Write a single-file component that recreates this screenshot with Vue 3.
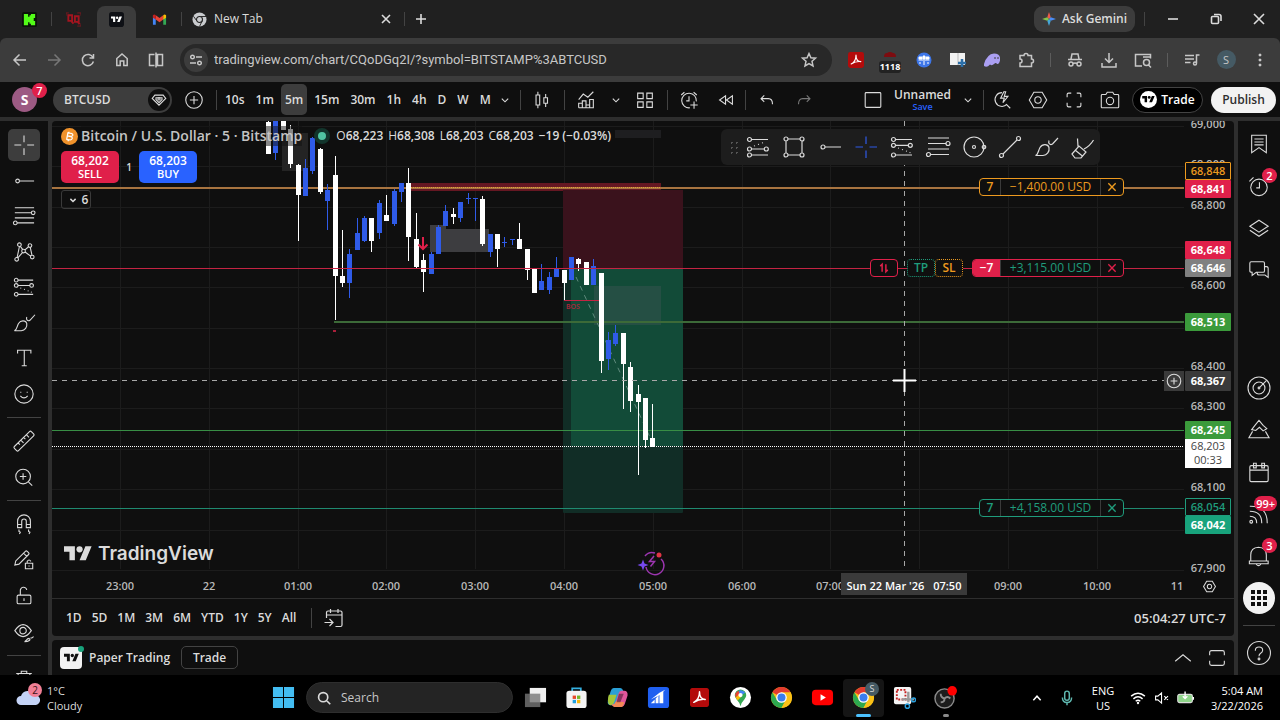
<script setup>
import { h, ref } from 'vue'

// circle as a path segment, so every icon stays a single d string
const c = (x, y, r) => `M${x - r} ${y}a${r} ${r} 0 1 0 ${2 * r} 0a${r} ${r} 0 1 0 ${-2 * r} 0`

const icons = {
  back: 'M18 12H6.5M11.5 6.5L6 12l5.5 5.5',
  forward: 'M6 12h11.5M12.5 6.5L18 12l-5.5 5.5',
  reload: 'M17 9.5A5.6 5.6 0 1 0 17.4 13.5M17.5 6v4h-4',
  home: 'M6.8 10.5v7h3.4v-4.5h3.6v4.5h3.4v-7L12 6z',
  split: 'M10.5 6.5h-5v11h5M13.5 6.5h5v11h-5zM12 4.5v15',
  tune: 'M6 9h1' + c(8.5, 9, 1.8) + 'M12 9h6M6 15h6' + c(15.5, 15, 1.8),
  star: 'M12 5.5l1.9 4.3 4.6.4-3.5 3.1 1 4.6-4-2.4-4 2.4 1-4.6-3.5-3.1 4.6-.4z',
  puzzle: 'M6 7.5h4a2 2 0 0 1 4 0h3.5v3.5a2 2 0 0 1 0 4v3.5H6v-3.5a2 2 0 0 0 0-4z',
  incognito: 'M5 11.5h14M8 11l1-5h6l1 5' + c(8, 16, 2) + c(16, 16, 2) + 'M10 15.5q2-1 4 0',
  download: 'M12 5v9M8 10.5l4 4 4-4M5 15v4h14v-4',
  tabsearch: 'M11 18H4.5V6.5h15v4M12 9h7' + c(15.5, 14.5, 3) + 'M17.5 17l2.5 2.5',
  playlist: 'M5 7.5h9M5 11h9M5 14.5h5.5M16.5 15V7h3' + c(15, 15.5, 1.5),
  dots: c(12, 7, 0.7) + c(12, 12, 0.7) + c(12, 17, 0.7),
  x: 'M8 8l8 8M16 8l-8 8',
  close: 'M7 7l10 10M17 7L7 17',
  plus: 'M12 7v10M7 12h10',
  minimize: 'M7 12h10',
  restore: 'M8.5 9.5h5q1 0 1 1v5q0 1-1 1h-5q-1 0-1-1v-5q0-1 1-1zM10 7.5h5q2 0 2 2V14',
  chevron: 'M8.5 10.5l3.5 3.5 3.5-3.5',
  chevronUp: 'M3.5 15.5l8.5-7 8.5 7',
  trayUp: 'M8 14.5l4-4.5 4 4.5',
  addCircle: c(12, 12, 9) + 'M12 7.5v9M7.5 12h9',
  candles: 'M5.5 6.5h4v11h-4zM7.5 3v3.5M7.5 17.5V21M14 9.5h4v6h-4zM16 5.5v4M16 15.5v4',
  indicators: 'M4 20.5v-5h4v5M8 20.5v-7.5h4v7.5M12 20.5v-3h4v3M16 20.5v-9h4v9zM4 20.5h16M4 11.5l5-6 5 3.5 6-6',
  layouts: 'M4 4.5h6v6H4zM14 4.5h6v6h-6zM4 14h6v6H4zM14 14h6v6h-6z',
  alertAdd: 'M13 20.5a8 8 0 1 1 7-7M12 8v5H9M3.5 6.5L7 3.5M17 3.5l3.5 3M17.5 13.5v8M13.5 17.5h8',
  rewind: 'M11.5 7.5v9L5 12zM19 7.5v9L12.5 12z',
  undo: 'M9 7l-3.5 3.5L9 14M6 10.5h7.5q4.5 0 4.5 6',
  redo: 'M15 7l3.5 3.5L15 14M18 10.5h-7.5q-4.5 0-4.5 6',
  square: 'M4.5 4h15q1 0 1 1v14q0 1-1 1h-15q-1 0-1-1V5q0-1 1-1z',
  quickSearch: 'M12 4a7.5 7.5 0 1 0 5.5 12.5M17 17l4 4M14 3l-3.5 7h4L13 15l5.5-7h-4L16 3z',
  hexagon: 'M7.5 3.5h9L21.5 12l-5 8.5h-9L2.5 12z' + c(12, 12, 3.5),
  fullscreen: 'M4.5 9V6q0-1.5 1.5-1.5h3M15 4.5h3q1.5 0 1.5 1.5v3M19.5 15v3q0 1.5-1.5 1.5h-3M9 19.5H6q-1.5 0-1.5-1.5v-3',
  maximize: 'M4 9V6q0-2 2-2h12q2 0 2 2v3M4 15v3q0 2 2 2h12q2 0 2-2v-3',
  camera: 'M3.5 6h4L9 3.5h6L16.5 6h4q1 0 1 1v12.5q0 1-1 1h-17q-1 0-1-1V7q0-1 1-1z' + c(12, 13, 4),
  cross: 'M1.5 12h7.5M15.5 12H23M12 1.5V9M12 15.5V23',
  hline: c(5, 12, 2) + 'M7 12h16',
  fib: 'M2 3h21M2 8.5h18' + c(22, 8.5, 2) + 'M2 14h21' + c(2.5, 19.5, 2) + 'M4.5 19.5H23',
  pattern: c(7, 4, 2) + c(18.5, 5, 2) + c(11.5, 11, 2) + c(4, 20, 2) + c(21, 17.5, 2) +
    'M7 6L4.5 18M8 5.8L10.5 9.2M13 9.7L17 6.3M18.8 7L20.7 15.5M13.2 12L19.2 16.5M10.3 12.6L5.3 18.5',
  forecast: c(3.5, 4.5, 2) + c(3.5, 10.3, 2) + c(20.3, 10.3, 2) + c(3.5, 20, 2) +
    'M5.5 4.5H22M5.5 10.3h12.8M5.5 20H22M8 13l1 .3M12 14.5l1 .3M16 16l1 .3M19.5 17.5l1 .3',
  longPos: c(3.5, 4.5, 2) + c(3.5, 14, 2) + c(20.3, 14, 2) + c(3.5, 20, 2) +
    'M5.5 4.5H22M5.5 14h12.8M5.5 20H22M8 11l1-.3M12 9.5l1-.3M16 8l1-.3',
  brush: 'M1.5 20.5c3-1 2.5-4.5 4.5-8 2.5-4 8-3.5 9 0 .8 4-2 7.5-6 8zM15 5.5c-1 3 1 5 3.5 3.5L24 3',
  text: 'M5 7V3.5h14.5V7M12.3 3.5v17M9.5 20.5h5.5',
  smile: c(12, 12, 10) + 'M8.5 9.5v1M15.5 9.5v1M8 14q4 4.5 8 0',
  ruler: 'M1.5 18L18 1.8q1-1 2 0l2.5 2.5q1 1 0 2L6 22.5q-1 1-2 0L1.5 20q-1-1 0-2zM5.5 14l2 2M8.5 11l3 3M11.5 8l2 2M14.5 5l3 3',
  zoomIn: c(11, 11.5, 8) + 'M17 17.5l4 4M11 8v7M7.5 11.5h7',
  magnet: 'M5 16V9a7 7 0 0 1 14 0v7h-4.5V9a2.5 2.5 0 0 0-5 0v7zM5 12.5h4.5M14.5 12.5H19M6.5 18v2l1.5 1-1 2M17 18v2l1.5 1-1 2',
  pencilLock: 'M2 17.5l1-4.5L13.5 2.5q1-1 2 0l1.5 1.5q1 1 0 2L6.5 16.5zM11.5 4.5l3.5 3.5M13.5 15.5h8v6h-8zM15.5 15.5v-2q2-3 4 0M17.5 18v1',
  lock: 'M6 11h12q1.5 0 1.5 1.5v6.5q0 1.5-1.5 1.5H6q-1.5 0-1.5-1.5v-6.5Q4.5 11 6 11zM8 11V6.5a3.5 3.5 0 0 1 7-1M12 14.5v3',
  eye: 'M2 10.5q9-13 18 0q-9 13-18 0z' + c(11, 10.5, 3.5) + 'M12.5 22.5c2 0 2-3.5 5-3.5 2.5 1.5 0 3.5-5 3.5zM19 18.5h1.5l2-1.5',
  trash: 'M3.5 6h17M9 6V3.5h6V6M5.5 6l1 15h11l1-15',
  calendarGo: 'M4.5 12V6.5Q4.5 5 6 5h12.5Q20 5 20 6.5V19q0 1.5-1.5 1.5h-5M4.5 9H20M8.5 3v4M16 3v4M2.5 16.5h8M7.5 13l3.5 3.5L7.5 20',
  rect: 'M6 4h12M6 20h12M4 6v12M20 6v12' + c(4, 4, 2) + c(20, 4, 2) + c(4, 20, 2) + c(20, 20, 2),
  circle: c(12, 12, 10) + c(12, 12, 1.5) + c(22, 12, 1.7),
  trend: c(3.5, 20.5, 2) + c(20.5, 3.5, 2) + 'M5 19L19 5',
  eraser: 'M2 19l7-8 7 6-5 6H5zM5 15l8 6.5M8 11.5l-.5-8M14 14q6-3 9.5-9',
  reverse: 'M9.5 17V7L7 9.5M14.5 7v10l2.5-2.5',
  list: 'M4 2.5h16v19L12 16l-8 5.5zM7 6.5h10M7 9.8h10M7 13h10',
  alarm: c(12, 13.5, 9) + 'M12.5 8v6H9M1.5 7L6 2.5',
  layers: 'M12 3.5l10 6.5-10 6.5L2 10zM2 14.5l10 6.5 10-6.5',
  chat: 'M3.5 3h13Q18 3 18 4.5V13q0 1.5-1.5 1.5H9L4.5 18v-3.5Q2 14.5 2 13V4.5Q2 3 3.5 3zM18 8q4 0 4 2v10l-3.5-2.5H12Q10 17.5 10 15',
  target: c(12, 12, 12) + c(12, 12, 6.5) + c(12, 12, 1) + 'M13 11l7-7',
  pine: 'M8 6.5L12 1.5l4.5 5.5M8 6.5L4 11.5l4.5 1 4-3.5 4 4 4-2.5-4-3.5M5 13.5L1 20.5h22l-4-7',
  calendar: 'M3.5 5h17Q22 5 22 6.5V21q0 1.5-1.5 1.5h-17Q2 22.5 2 21V6.5Q2 5 3.5 5zM2 10h20M6 2.5h3v5H6zM15 2.5h3v5h-3z',
  feed: c(3.5, 20.5, 1.5) + 'M2 14.5q7.5 0 7.5 7.5M2 9q13 0 13 13M2 3.5Q21 3 21 22',
  bell: 'M3 17.5V11q0-8 8.5-8.5Q20 3 20 11v6.5zM1.5 17.5H22v3H1.5zM9 21q2.5 3 5 0',
  help: c(12, 12, 12.5) + 'M8 9.5q0-4 4-4t4 3.5q0 2-2.5 3.5-1.5 1-1.5 3' + c(12, 18.5, 1),
  search: c(11, 11, 5.5) + 'M15 15l4.5 4.5',
  mic: 'M9.5 7a2.5 2.5 0 0 1 5 0v5a2.5 2.5 0 0 1-5 0zM7 11.5q0 5.5 5 5.5t5-5.5M12 17v3',
  wifi: 'M4.5 10q7.5-6.5 15 0M7 13q5-4.5 10 0M9.5 15.5q2.5-2 5 0' + c(12, 17.5, 0.5),
  mute: 'M5 10v4h2.5l4 3.5v-11L7.5 10zM14.5 10l4 4M18.5 10l-4 4',
}

const Icon = (props) =>
  h('svg', { viewBox: '0 0 24 24', class: 'icon', 'aria-hidden': 'true' }, [h('path', { d: icons[props.name] })])
Icon.props = ['name']

const symbol = ref('BTCUSD')
const url = ref('tradingview.com/chart/CQoDGq2I/?symbol=BITSTAMP%3ABTCUSD')
const query = ref('')
const interval = ref('5m')
const intervals = ['10s', '1m', '5m', '15m', '30m', '1h', '4h', 'D', 'W', 'M']
const ranges = ['1D', '5D', '1M', '3M', '6M', 'YTD', '1Y', '5Y', 'All']

const drawTools = [
  ['cross', 'hline', 'fib', 'pattern', 'forecast', 'brush', 'text', 'smile'],
  ['ruler', 'zoomIn'],
  ['magnet', 'pencilLock', 'lock', 'eye'],
  ['trash'],
]
const favourites = ['longPos', 'rect', 'hline', 'cross', 'forecast', 'fib', 'circle', 'trend', 'brush', 'eraser']
const railTop = [{ icon: 'list' }, { icon: 'alarm', badge: '2' }, { icon: 'layers' }, { icon: 'chat' }]
const railBottom = [
  { icon: 'target' },
  { icon: 'pine' },
  { icon: 'calendar' },
  { icon: 'feed', badge: '99+' },
  { icon: 'bell', badge: '3' },
]

// [high, low, body top, body bottom, rising], in plot pixels
const bars = [
  [-1, 33, 1, 33, 0], [-6, 39, -1, 32, 1], [-6, 9, -6, 9, 0], [4, 47, 8, 43, 0], [43, 120, 44, 74, 0],
  [38, 75, 47, 75, 1], [16, 53, 17, 50, 1], [27, 73, 28, 71, 0], [63, 109, 69, 80, 1], [35, 199, 54, 155, 0],
  [109, 166, 155, 162, 0], [128, 177, 133, 162, 1], [97, 129, 112, 129, 1], [95, 121, 97, 120, 1], [97, 131, 97, 120, 0],
  [79, 118, 82, 112, 1], [74, 100, 94, 100, 0], [68, 105, 70, 103, 1], [62, 81, 62, 71, 1], [47, 140, 62, 116, 0],
  [92, 147, 118, 146, 0], [133, 171, 139, 151, 0], [131, 153, 133, 153, 1], [104, 133, 106, 133, 1], [84, 105, 90, 105, 1],
  [87, 103, 93, 96, 0], [81, 101, 81, 97, 1], [72, 83, 77, 78, 1], [77, 100, 77, 78, 1], [75, 125, 78, 123, 0],
  [113, 136, 113, 131, 1], [113, 146, 113, 128, 0], [116, 126, 121, 122, 1], [118, 124, 118, 119, 1], [102, 128, 118, 128, 0],
  [128, 159, 128, 149, 0], [148, 172, 148, 172, 0], [143, 169, 160, 169, 1], [151, 173, 156, 169, 1], [136, 156, 147, 156, 1],
  [149, 179, 149, 162, 0], [136, 159, 136, 159, 1], [137, 150, 138, 143, 0], [141, 164, 141, 164, 0], [138, 164, 145, 164, 1],
  [152, 252, 152, 240, 0], [211, 249, 219, 238, 1], [204, 225, 212, 223, 1], [212, 288, 212, 243, 0], [241, 291, 246, 280, 0],
  [264, 354, 273, 281, 0], [277, 327, 277, 319, 0], [283, 326, 317, 326, 0],
]
const candles = bars.map(([high, low, top, bottom, up], i) => ({
  x: Math.round(216 + i * 7.39), high, low, top, height: Math.max(bottom - top, 1), up,
}))

const gridRows = Array.from({ length: 12 }, (_, i) => Math.round(5 + i * 40.35))
const gridCols = Array.from({ length: 12 }, (_, i) => Math.round(68 + i * 88.8))

const prices = ['69,000', '68,900', '68,800', '68,700', '68,600', '', '68,400', '68,300', '', '68,100', '', '67,900']
  .map((text, i) => ({ text, y: gridRows[i] - 2 }))
  .filter((p) => p.text)
const hours = ['23:00', '22', '01:00', '02:00', '03:00', '04:00', '05:00', '06:00', '07:00', '', '09:00', '10:00']
  .map((text, i) => ({ text, x: gridCols[i] }))
  .filter((t) => t.text)
hours.push({ text: '11', x: 1125 })

const tags = [
  { text: '68,848', y: 50, kind: 'orange' },
  { text: '68,841', y: 68, kind: 'red' },
  { text: '68,648', y: 129, kind: 'red' },
  { text: '68,646', y: 147, kind: 'gray' },
  { text: '68,513', y: 201, kind: 'green' },
  { text: '68,367', y: 260, kind: 'cursor' },
  { text: '68,245', y: 309, kind: 'green' },
  { text: '68,054', y: 386, kind: 'outline' },
  { text: '68,042', y: 404, kind: 'teal' },
]
</script>

<template>
  <div class="desktop">
    <svg class="defs" aria-hidden="true">
      <symbol id="tv" viewBox="0 0 36 28">
        <path d="M14 22H7V11H0V4h14v18zM28 22h-8l7.5-18h8L28 22z" />
        <circle cx="20" cy="8" r="4" />
      </symbol>
      <symbol id="chrome" viewBox="0 0 24 24">
        <circle cx="12" cy="12" r="11" fill="#fbc116" />
        <path d="M12 12L2.5 6.5A11 11 0 0 1 21.5 6.5z" fill="#e33b2e" />
        <path d="M2.5 6.5L7.5 15 12 12 16.5 14.5 12 23A11 11 0 0 1 2.5 6.5z" fill="#2da94f" />
        <path d="M12 6.5h9.5A11 11 0 0 1 12 23l4.5-8.5z" fill="#fbc116" />
        <circle cx="12" cy="12" r="5.5" fill="#fff" />
        <circle cx="12" cy="12" r="4.2" fill="#3b7ded" />
      </symbol>
      <symbol id="pdf" viewBox="0 0 20 20">
        <rect width="20" height="20" rx="3" fill="#b30b0b" />
        <path d="M4 15c4-2 6-6 6-11 0 5 2 8 6 8-4-.5-8 .5-12 3z" fill="none" stroke="#fff" stroke-width="1.5" stroke-linejoin="round" />
      </symbol>
    </svg>

    <header class="tabs">
      <button class="tab" aria-label="Kick">
        <svg viewBox="0 0 16 16" class="fav"><rect width="16" height="16" rx="2" fill="#0b120a" /><path d="M2 2h4.500v3H8V3.500h1.500V2H14v4.500h-1.500v3H14V14H9.500v-1.500H8V11H6.500v3H2z" fill="#53fc18" /></svg>
      </button>
      <span class="bar"></span>
      <button class="tab" aria-label="Pinned tab">
        <svg viewBox="0 0 16 16" class="fav"><path d="M2.5 3.5h4v6h-4zM9.5 4.5h4v6h-4zM5 9l3 3.5M12 10l2.5 3" fill="none" stroke="#a3141f" stroke-width="2" /><path d="M0 4V1h3M12 1h4v3M16 12v3h-4" fill="none" stroke="#7c1820" /></svg>
      </button>
      <button class="tab current" aria-label="TradingView">
        <svg viewBox="0 0 16 16" class="fav"><rect width="16" height="16" rx="3" fill="#0e1015" /><use href="#tv" x="2" y="3" width="12" height="10" fill="#fff" /></svg>
      </button>
      <button class="tab" aria-label="Gmail">
        <svg viewBox="0 0 16 16" class="fav"><path d="M1 3.5v10h3V7z" fill="#4285f4" /><path d="M15 3.5v10h-3V7z" fill="#34a853" /><path d="M4 3.5V8l4 3 4-3V3.5l-4 3z" fill="#ea4335" /><path d="M1 3.5Q2.5 2 4 3.5V8L1 6z" fill="#c5221f" /><path d="M15 3.5Q13.5 2 12 3.5V8l3-2z" fill="#fbbc04" /></svg>
      </button>
      <span class="bar"></span>
      <div class="newtab">
        <svg viewBox="0 0 16 16" class="fav"><circle cx="8" cy="8" r="7.5" fill="#c9cbce" /><path d="M8 4.8h7M5.2 9.5L1.5 4.5M10.8 9.5L8 15.5" stroke="#242424" /><circle cx="8" cy="8" r="3.2" fill="#c9cbce" stroke="#242424" stroke-width="1.2" /></svg>
        <span>New Tab</span>
        <button aria-label="Close tab"><Icon name="x" class="bold" /></button>
      </div>
      <span class="bar"></span>
      <button class="add" aria-label="New tab"><Icon name="plus" class="bold" /></button>
      <button class="gemini">
        <svg viewBox="0 0 16 16"><path d="M8 0l2 6L8 8 6 6z" fill="#ee5a48" /><path d="M16 8l-6 2-2-2 2-2z" fill="#4a8df6" /><path d="M8 16l-2-6 2-2 2 2z" fill="#45a7d8" /><path d="M0 8l6-2 2 2-2 2z" fill="#86c34b" /></svg>
        Ask Gemini
      </button>
      <span class="bar"></span>
      <div class="window-buttons">
        <button aria-label="Minimize"><Icon name="minimize" class="bold" /></button>
        <button aria-label="Restore"><Icon name="restore" class="bold" /></button>
        <button aria-label="Close"><Icon name="close" class="bold" /></button>
      </div>
    </header>

    <nav class="toolbar">
      <button aria-label="Back"><Icon name="back" /></button>
      <button aria-label="Forward" class="dim"><Icon name="forward" /></button>
      <button aria-label="Reload"><Icon name="reload" /></button>
      <button aria-label="Home"><Icon name="home" /></button>
      <button aria-label="Split view"><Icon name="split" /></button>
      <div class="address">
        <span class="site"><Icon name="tune" /></span>
        <input v-model="url" aria-label="Address" />
        <button aria-label="Bookmark"><Icon name="star" /></button>
      </div>
      <button aria-label="Acrobat"><svg class="ext"><use href="#pdf" width="16" height="16" /></svg></button>
      <button aria-label="Blocker" class="blocker">
        <svg viewBox="0 0 24 24"><path d="M6 9q0-4 3-4 3-2 6 0 3 0 3 4z" fill="#7d0c10" /></svg>
        <b>1118</b>
      </button>
      <button aria-label="Extension"><svg viewBox="0 0 16 16" class="ext"><circle cx="8" cy="8" r="7.5" fill="#3d76e8" /><path d="M3 5h3v2H3zM7 4h2v3H7zM10 5h3v2h-3zM2.5 8h11M4 10v2M8 9v4M12 10v2" fill="#fff" stroke="#fff" /></svg></button>
      <button aria-label="Reader"><svg viewBox="0 0 16 16" class="ext"><path d="M0 1h15v12H0z" fill="#f2f2f2" /><path d="M8 1v12" stroke="#bbb" /><path d="M12 7v8M8 11h8" stroke="#2c6fa8" stroke-width="2.5" /></svg></button>
      <button aria-label="Phantom"><svg viewBox="0 0 16 16" class="ext"><path d="M0 12Q3 2 10 1.5q7 0 6 7-1 4-3 3.5-1-2-3 0-2 2-4 .5Q3 16 0 14z" fill="#ab9ff2" /><path d="M11 5v2M14 5v2" stroke="#3c3c3c" /></svg></button>
      <button aria-label="Extensions"><Icon name="puzzle" /></button>
      <span class="bar"></span>
      <button aria-label="Incognito"><Icon name="incognito" /></button>
      <button aria-label="Downloads"><Icon name="download" /></button>
      <button aria-label="Search tabs"><Icon name="tabsearch" /></button>
      <span class="bar"></span>
      <button aria-label="Media"><Icon name="playlist" /></button>
      <button aria-label="Profile"><span class="profile">S</span></button>
      <button aria-label="Menu"><Icon name="dots" /></button>
    </nav>

    <main class="app">
      <div class="topbar">
        <button class="user" aria-label="Account">S<i class="badge">7</i></button>
        <div class="symbol">
          <input v-model="symbol" aria-label="Symbol" />
          <span><svg viewBox="0 0 24 24"><path d="M6.5 5.5h11L21 10l-9 9-9-9zM8 9h8v2.5L12 15.5 8 11.5z" /><circle cx="12" cy="10.5" r="1.5" /></svg></span>
        </div>
        <button class="tool" aria-label="Compare"><Icon name="addCircle" /></button>
        <span class="bar"></span>
        <div class="intervals">
          <button v-for="item in intervals" :key="item" :class="{ active: item === interval }" @click="interval = item">{{ item }}</button>
        </div>
        <button class="tool small more" aria-label="More intervals"><Icon name="chevron" /></button>
        <span class="bar"></span>
        <button class="tool" aria-label="Chart type"><Icon name="candles" /></button>
        <span class="bar"></span>
        <button class="tool" aria-label="Indicators"><Icon name="indicators" /></button>
        <button class="tool small" aria-label="Favourite indicators"><Icon name="chevron" /></button>
        <button class="tool" aria-label="Templates"><Icon name="layouts" /></button>
        <span class="bar"></span>
        <button class="tool" aria-label="Alert"><Icon name="alertAdd" /></button>
        <button class="tool snug" aria-label="Replay"><Icon name="rewind" /></button>
        <span class="bar"></span>
        <button class="tool" aria-label="Undo"><Icon name="undo" /></button>
        <button class="tool snug dim" aria-label="Redo"><Icon name="redo" /></button>
        <button class="tool layout" aria-label="Layout"><Icon name="square" /></button>
        <button class="name">Unnamed<small>Save</small></button>
        <button class="tool snug" aria-label="Layouts"><Icon name="chevron" /></button>
        <span class="bar"></span>
        <button class="tool narrow" aria-label="Quick search"><Icon name="quickSearch" /></button>
        <button class="tool narrow" aria-label="Settings"><Icon name="hexagon" /></button>
        <button class="tool narrow" aria-label="Fullscreen"><Icon name="fullscreen" /></button>
        <button class="tool narrow" aria-label="Snapshot"><Icon name="camera" /></button>
        <button class="trade"><svg viewBox="0 0 16 16"><circle cx="8" cy="8" r="8" fill="#fff" /><use href="#tv" x="2" y="3" width="12" height="10" /></svg>Trade</button>
        <button class="publish">Publish</button>
      </div>

      <aside class="tools">
        <div v-for="(group, i) in drawTools" :key="i" class="group">
          <button v-for="name in group" :key="name" :class="{ active: name === 'cross' }" :aria-label="name"><Icon :name="name" /></button>
        </div>
      </aside>

      <section class="chart">
        <div class="plot">
          <svg class="canvas" width="100%" height="100%">
            <g class="grid">
              <line v-for="y in gridRows" :key="'r' + y" x1="0" x2="100%" :y1="y + 0.5" :y2="y + 0.5" />
              <line v-for="x in gridCols" :key="'c' + x" :x1="x + 0.5" :x2="x + 0.5" y1="0" y2="100%" />
            </g>

            <!-- order blocks -->
            <rect x="230" y="12" width="26" height="38" fill="#242424" />
            <rect x="378" y="104" width="16" height="27" fill="#3d3d40" />
            <rect x="378" y="108" width="59" height="23" fill="#3d3d40" />
            <rect x="563" y="9" width="46" height="8" fill="#1e1e20" />
            <rect x="357" y="62" width="252" height="8" fill="#651722" />

            <!-- short position -->
            <rect x="511" y="69" width="120" height="79" fill="#3a121c" />
            <rect x="511" y="148" width="120" height="244" rx="1" fill="#112d26" />
            <rect x="519" y="148" width="112" height="177" fill="#124b38" />
            <rect x="542" y="165" width="67" height="39" fill="#254f44" />
            <path d="M524 156L602 325" class="path" />

            <line x1="0" x2="100%" y1="67" y2="67" stroke="#a87440" stroke-width="2" />
            <line x1="357" x2="609" y1="66.5" y2="66.5" stroke="#e0a03c" stroke-dasharray="1 1" />
            <line x1="282" x2="100%" y1="201" y2="201" stroke="#3c6a38" stroke-width="2" />
            <line x1="0" x2="100%" y1="309.5" y2="309.5" stroke="#388e45" />
            <line x1="0" x2="100%" y1="387.5" y2="387.5" stroke="#1f8a70" />
            <line x1="512" x2="547" y1="179.5" y2="179.5" stroke="#c42443" />
            <text x="514" y="188" class="bos">BOS</text>

            <g v-for="(k, i) in candles" :key="i" :class="k.up ? 'up' : 'down'">
              <rect :x="k.x" :y="k.high" width="1" :height="k.low - k.high" />
              <rect :x="k.x - 2" :y="k.top" width="5" :height="k.height" />
            </g>

            <line x1="0" x2="100%" y1="147.5" y2="147.5" stroke="#c42443" />
            <line x1="0" x2="100%" y1="325.5" y2="325.5" stroke="#fff" stroke-dasharray="1 1" />
            <path d="M371 116v12M366.5 123.5L371 128l4.5-4.5" class="arrow" />
            <rect x="281" y="209" width="3" height="2" fill="#a91f3a" />

            <line x1="0" x2="100%" y1="259.5" y2="259.5" class="cursor-line" />
            <line x1="852.5" x2="852.5" y1="0" y2="100%" class="cursor-line" />
            <path d="M841 259.5h23M852.5 248v23" stroke="#fff" stroke-width="2" />

            <g fill="none" stroke="#9c35b0" stroke-width="1.5">
              <path d="M593 435A9 9 0 0 1 603 432M609 438A9 9 0 1 1 594 446" />
              <path d="M602 435l-4.5 5.5h5l-4 5" />
            </g>
            <path d="M591 438.5l1.5 4 4 1.5-4 1.5-1.5 4-1.5-4-4-1.5 4-1.5z" fill="#7748f0" />
            <circle cx="607" cy="434" r="2.5" fill="#e03545" />
          </svg>

          <div class="legend">
            <div class="title">
              <svg viewBox="0 0 16 16" class="coin"><circle cx="8" cy="8" r="8" fill="#f0922b" /><path d="M6 4.5l3.5.5q2 .5 1.5 2-.5 1-2 1 2 .5 1.5 2-.5 1.5-2.5 1.2L4.8 10.8M6.5 4.5L5.3 11M6 7.5l3 .5M7.5 3.5v1M6.8 11v1.5" fill="none" stroke="#fff" stroke-width="1.2" /></svg>
              <h1>Bitcoin / U.S. Dollar · 5 · Bitstamp</h1>
              <i class="status"></i>
              <p><span>O<b>68,223</b></span><span>H<b>68,308</b></span><span>L<b>68,203</b></span><span>C<b>68,203</b></span><b>−19 (−0.03%)</b></p>
            </div>
            <div class="quotes">
              <button class="sell">68,202<span>SELL</span></button>
              <small>1</small>
              <button class="buy">68,203<span>BUY</span></button>
            </div>
            <button class="collapse"><Icon name="chevron" />6</button>
          </div>

          <div class="favourites">
            <span class="grip"></span>
            <button v-for="name in favourites" :key="name" :class="{ active: name === 'cross' }" :aria-label="name"><Icon :name="name" /></button>
          </div>

          <div class="order stop">
            <div class="box"><span>7</span><span class="pnl">−1,400.00 USD</span><button aria-label="Cancel"><Icon name="x" /></button></div>
          </div>
          <div class="order position">
            <button class="flip" aria-label="Reverse"><Icon name="reverse" /></button>
            <div class="brackets"><button class="tp">TP</button><button class="sl">SL</button></div>
            <div class="box"><span class="qty">−7</span><span class="pnl">+3,115.00 USD</span><button aria-label="Close position"><Icon name="x" /></button></div>
          </div>
          <div class="order take">
            <div class="box"><span>7</span><span class="pnl">+4,158.00 USD</span><button aria-label="Cancel"><Icon name="x" /></button></div>
          </div>
          <button class="add-here" aria-label="Add at price"><Icon name="addCircle" /></button>

          <div class="brand"><svg><use href="#tv" /></svg>TradingView</div>
        </div>

        <div class="prices">
          <span v-for="p in prices" :key="p.y" class="price" :style="{ top: p.y + 'px' }">{{ p.text }}</span>
          <span v-for="tag in tags" :key="tag.text" :class="['tag', tag.kind]" :style="{ top: tag.y + 'px' }">{{ tag.text }}</span>
          <span class="last">68,203<br />00:33</span>
        </div>

        <div class="times">
          <span v-for="t in hours" :key="t.x" :style="{ left: t.x + 'px' }">{{ t.text }}</span>
          <b class="stamp">Sun 22 Mar '26<em>07:50</em></b>
        </div>
        <button class="axis-settings" aria-label="Axis settings"><Icon name="hexagon" /></button>

        <div class="ranges">
          <button v-for="r in ranges" :key="r">{{ r }}</button>
          <span class="bar"></span>
          <button aria-label="Go to date"><Icon name="calendarGo" /></button>
          <button class="clock">05:04:27 UTC-7</button>
        </div>
      </section>

      <section class="paper">
        <span class="broker"><svg><use href="#tv" /></svg></span>
        <span>Paper Trading</span>
        <button class="outlined">Trade</button>
        <button class="up-btn" aria-label="Expand"><Icon name="chevronUp" /></button>
        <button aria-label="Maximize"><Icon name="maximize" /></button>
      </section>

      <aside class="rail">
        <button v-for="item in railTop" :key="item.icon" :aria-label="item.icon"><Icon :name="item.icon" /><i v-if="item.badge" class="badge">{{ item.badge }}</i></button>
        <div class="spacer"></div>
        <button v-for="item in railBottom" :key="item.icon" :aria-label="item.icon"><Icon :name="item.icon" /><i v-if="item.badge" class="badge">{{ item.badge }}</i></button>
        <button class="apps" aria-label="Apps"><svg viewBox="0 0 32 32"><circle cx="16" cy="16" r="16" fill="#f2f2f2" /><path d="M8 8h4v4H8zM14 8h4v4h-4zM20 8h4v4h-4zM8 14h4v4H8zM14 14h4v4h-4zM20 14h4v4h-4zM8 20h4v4H8zM14 20h4v4h-4zM20 20h4v4h-4z" fill="#0f0f0f" /></svg></button>
        <hr />
        <button aria-label="Help"><Icon name="help" /></button>
      </aside>
    </main>

    <footer class="taskbar">
      <button class="weather">
        <svg viewBox="0 0 28 26"><path d="M6 23a4.5 4.5 0 0 1 0-9 7 7 0 0 1 13-1 5 5 0 0 1 2 10z" fill="#c4d3f6" /><circle cx="20" cy="8" r="7" fill="#f07f95" /><text x="20" y="12" text-anchor="middle">2</text></svg>
        <span>1°C<br />Cloudy</span>
      </button>
      <button class="pin" aria-label="Start"><svg viewBox="0 0 24 24"><path d="M1 1h10.5v10.5H1zM12.5 1H23v10.5H12.5zM1 12.5h10.5V23H1zM12.5 12.5H23V23H12.5z" fill="#43bdf2" /></svg></button>
      <label class="search"><Icon name="search" class="bold" /><input v-model="query" placeholder="Search" /></label>
      <button class="pin" aria-label="Task view"><svg viewBox="0 0 24 24"><rect x="6" y="2" width="17" height="15" fill="#f0f0f0" /><rect x="1" y="8" width="16" height="14" fill="#777" fill-opacity=".8" /></svg></button>
      <button class="pin" aria-label="Store"><svg viewBox="0 0 24 24"><path d="M7.5 6V2.5h9V6" fill="none" stroke="#35b0e0" stroke-width="1.8" /><rect x="1.5" y="5" width="21" height="18" rx="3" fill="#f4f4f4" /><path d="M8 10h3.5v3.5H8z" fill="#e74a2c" /><path d="M12.5 10H16v3.5h-3.5z" fill="#76b82a" /><path d="M8 14.5h3.5V18H8z" fill="#1e9fe0" /><path d="M12.5 14.5H16V18h-3.5z" fill="#f4b50c" /></svg></button>
      <button class="pin" aria-label="Copilot"><svg viewBox="0 0 24 24"><path d="M8 2h7q2 0 3 3l1 3h-5l-3 9q-1 3-3 3H5q-4 0-3-5l3-10q1-3 3-3z" fill="#2a9fd6" /><path d="M2 15q0-4 1-6h8l-2.5 8q-1 3-3 3-3.5 0-3.5-5z" fill="#a5c63a" /><path d="M16 22H9q-2 0-3-3 3 1 4.5-3L13 8q1-3 3-3h3q4 0 3.5 5l-3 9q-1 3-3.5 3z" fill="#e0559a" /><path d="M16 22H9q-2 0-3-3 3 1 4.5-3l8.5 1q-1 5-3 5z" fill="#f38a55" /><path d="M13.5 8h5L15 17h-4z" fill="#000" fill-opacity=".4" /></svg></button>
      <button class="pin" aria-label="Trading app"><svg viewBox="0 0 24 24"><rect x="1" y="1" width="22" height="22" rx="3" fill="#1f5ff0" /><path d="M4 18l4-4v4zM9 18v-5l3-3v8zM13 18v-8l4-4v12zM4 14l9-7 6-3-5 5z" fill="#fff" /></svg></button>
      <button class="pin" aria-label="Acrobat"><svg viewBox="0 0 24 24"><use href="#pdf" x="2" y="2" width="20" height="20" /></svg></button>
      <button class="pin" aria-label="Maps"><svg viewBox="0 0 24 24"><circle cx="12" cy="12" r="11" fill="#fff" /><path d="M12 21q-1-4-4-7a6 6 0 1 1 8 0q-3 3-4 7z" fill="#34a853" /><path d="M7 12q-2-5 3-7l2 4z" fill="#ea4335" /><path d="M10 5q4-2 7 2l-5 3z" fill="#4285f4" /><path d="M7 12l4-4 2 3-4 4z" fill="#fbbc04" /><circle cx="12" cy="9.5" r="2.2" fill="#fff" /></svg></button>
      <button class="pin" aria-label="Chrome"><svg viewBox="0 0 24 24"><use href="#chrome" /></svg></button>
      <button class="pin" aria-label="YouTube"><svg viewBox="0 0 24 24"><rect x="1" y="4" width="22" height="16" rx="4" fill="#f00" /><path d="M10 8.5v7l5.5-3.5z" fill="#fff" /></svg></button>
      <button class="pin open" aria-label="Chrome profile S"><svg viewBox="0 0 24 24"><use href="#chrome" /></svg><i>S</i></button>
      <button class="pin" aria-label="Snipping tool"><svg viewBox="0 0 24 24"><rect x="1" y="1" width="18" height="18" rx="2" fill="#f4f4f4" /><path d="M4 4h9v10H4z" fill="none" stroke="#c42020" stroke-width="2" stroke-dasharray="2 1.5" /><path d="M16 6v11M9 14h13" stroke="#999" stroke-width="2.5" /><circle cx="15" cy="21" r="2.2" fill="none" stroke="#2a9fdc" stroke-width="1.5" /><circle cx="21.5" cy="14.5" r="2" fill="none" stroke="#2a9fdc" stroke-width="1.5" /></svg></button>
      <button class="pin running" aria-label="OBS"><svg viewBox="0 0 24 24"><circle cx="11" cy="13" r="10" fill="#1c1c1c" stroke="#8a8a8a" stroke-width="1.5" /><path d="M11 13q-4-1-4-5M11 13q3-3 6 0M11 13q0 4-4 4" fill="none" stroke="#8a8a8a" stroke-width="2" /><circle cx="19" cy="5" r="5" fill="#f00" /></svg></button>
      <div class="tray">
        <button aria-label="Hidden icons"><Icon name="trayUp" class="bold" /></button>
        <button aria-label="Microphone" class="mic"><Icon name="mic" class="bold" /></button>
        <span class="lang">ENG<br />US</span>
        <button class="quick" aria-label="Network, sound, battery">
          <Icon name="wifi" class="bold" /><Icon name="mute" />
          <svg viewBox="0 0 24 24" class="icon"><rect x="3" y="8" width="16" height="9" rx="2" fill="#8fd48a" stroke="#dcdcdc" /><path d="M20 11v3M11 5v7M8.5 10l2.5 2.5 2.5-2.5" stroke="#fff" stroke-width="1.5" /></svg>
        </button>
        <span class="date">5:04 AM<br />3/22/2026</span>
      </div>
    </footer>
  </div>
</template>

<style>
body {
  background: #000;
}
</style>

<style scoped>
.desktop {
  height: 100vh;
  display: flex;
  flex-direction: column;
  overflow: hidden;
  background: #202020;
  color: #dbdbdb;
  font-family: "Open Sans", "Noto Sans", sans-serif;
  font-size: 12px;
  line-height: 16px;
}

.defs {
  position: absolute;
  width: 0;
  height: 0;
}

button,
input {
  border: 0;
  padding: 0;
  background: none;
  color: inherit;
  font: inherit;
  outline: none;
}

button {
  display: flex;
  align-items: center;
  justify-content: center;
  flex: none;
  white-space: nowrap;
}

i,
em {
  font-style: normal;
}

.icon {
  width: 24px;
  height: 24px;
  flex: none;
  fill: none;
  stroke: currentColor;
  stroke-width: 1.2;
  overflow: visible;
}

.icon.bold {
  stroke-width: 1.6;
}

.bar {
  width: 1px;
  height: 20px;
  flex: none;
  background: #434343;
}

.badge {
  position: absolute;
  min-width: 15px;
  height: 15px;
  box-sizing: border-box;
  padding: 0 2px;
  border-radius: 8px;
  background: #e0204a;
  color: #fff;
  font-size: 11px;
  font-weight: 600;
  line-height: 15px;
  text-align: center;
}

/* browser */
.tabs {
  flex: none;
  height: 38px;
  display: flex;
  align-items: center;
  padding-left: 8px;
}

.tabs .bar {
  height: 14px;
}

.tab {
  width: 43px;
  height: 38px;
}

.tab.current {
  width: 39px;
  height: 32px;
  align-self: flex-end;
  margin: 0 2px;
  padding-bottom: 6px;
  box-sizing: border-box;
  border-radius: 8px 8px 0 0;
  background: #3c3c3c;
}

.fav {
  width: 15px;
  height: 15px;
}

.newtab {
  width: 222px;
  box-sizing: border-box;
  display: flex;
  align-items: center;
  gap: 7px;
  padding: 0 6px 0 10px;
}

.newtab button {
  margin-left: auto;
}

.add {
  width: 31px;
}

.gemini {
  width: 101px;
  height: 26px;
  gap: 6px;
  margin: 0 9px 0 auto;
  border-radius: 9px;
  background: #3c3c3c;
  font-weight: 600;
}

.gemini svg {
  width: 14px;
  height: 14px;
}

.window-buttons {
  display: flex;
  padding-left: 6px;
}

.window-buttons button {
  width: 43px;
}

.toolbar {
  flex: none;
  height: 44px;
  display: flex;
  align-items: center;
  padding: 0 3px;
  box-sizing: border-box;
  padding-bottom: 1px;
  background: #3c3c3c;
  border-radius: 6px 6px 0 0;
  color: #c7c7c7;
}

.toolbar > button {
  width: 34px;
  height: 34px;
}

.toolbar .icon {
  stroke-width: 1.5;
}

.toolbar .bar {
  height: 14px;
  margin: 0 7px;
  background: #5c5c5c;
}

.toolbar .dim,
.dim {
  color: #777;
}

.address {
  flex: 1;
  min-width: 0;
  height: 32px;
  display: flex;
  align-items: center;
  gap: 6px;
  margin: 0 7px;
  padding: 0 11px 0 4px;
  box-sizing: border-box;
  border-radius: 16px;
  background: #282828;
}

.address input {
  flex: 1;
  min-width: 0;
  font-family: Roboto, "Open Sans", sans-serif;
  font-size: 13px;
}

.site {
  display: flex;
  border-radius: 50%;
  background: #3c3c3c;
}

.ext {
  width: 16px;
  height: 16px;
}

.blocker {
  position: relative;
}

.blocker svg {
  width: 24px;
  height: 24px;
}

.blocker b {
  position: absolute;
  left: 6px;
  bottom: 4px;
  width: 22px;
  height: 12px;
  border-radius: 3px;
  background: #222;
  color: #fff;
  font-size: 9px;
  line-height: 12px;
}

.profile {
  width: 19px;
  height: 19px;
  border-radius: 50%;
  background: #455a64;
  font-size: 11px;
  line-height: 19px;
}

/* trading app */
.app {
  flex: 1;
  min-height: 0;
  display: grid;
  grid-template-columns: 48px minmax(0, 1fr) 42px;
  grid-template-rows: 35px minmax(0, 1fr) 35px;
  gap: 4px;
  background: #2e2e2e;
  font-weight: 600;
}

.topbar,
.tools,
.chart,
.paper,
.rail {
  background: #0f0f0f;
}

.topbar {
  grid-column: 1 / -1;
  display: flex;
  align-items: center;
  padding: 0 4px 0 12px;
}

.user {
  position: relative;
  width: 25px;
  height: 25px;
  border-radius: 50%;
  background: #9c5a83;
  color: #fff;
  font-size: 14px;
  font-weight: 700;
}

.user .badge {
  top: -4px;
  right: -10px;
}

.symbol {
  width: 119px;
  height: 26px;
  display: flex;
  align-items: center;
  margin: 0 7px 0 16px;
  box-sizing: border-box;
  padding: 0 2px 0 11px;
  border-radius: 13px;
  background: #3d3d3d;
}

.symbol input {
  flex: 1;
  min-width: 0;
}

.symbol span {
  width: 22px;
  height: 22px;
  display: flex;
  align-items: center;
  justify-content: center;
  border-radius: 50%;
  background: #0f0f0f;
}

.symbol svg {
  width: 18px;
  height: 18px;
  fill: none;
  stroke: #dbdbdb;
  stroke-width: 1.5;
}

.tool {
  width: 43px;
  height: 32px;
}

.tool .icon {
  width: 22px;
  height: 22px;
}

.symbol + .tool {
  width: 30px;
  margin-right: 7px;
}

.tool.small {
  width: 16px;
}

.tool.more {
  margin: 0 7px 0 2px;
}

.tool.narrow {
  width: 36px;
}

.tool.snug {
  width: 30px;
}

.snug + .bar {
  margin-left: 4px;
}

.name + .snug + .bar {
  margin-left: 0;
}

.intervals {
  display: flex;
  gap: 3px;
  padding-left: 4px;
}

.intervals button {
  height: 31px;
  padding: 0 4px;
  border-radius: 5px;
}

.intervals .active {
  background: #3d3d3d;
}

.layout {
  margin-left: auto;
}

.name {
  flex-direction: column;
  margin-right: 2px;
  line-height: 14px;
}

.name small {
  color: #2962ff;
  font-size: 9px;
  line-height: 10px;
}

.trade {
  width: 71px;
  height: 26px;
  gap: 4px;
  margin: 0 8px 0 4px;
  border: 1px solid #434343;
  box-sizing: border-box;
  border-radius: 13px;
  background: #000;
  color: #fff;
}

.trade svg {
  width: 17px;
  height: 17px;
}

.publish {
  width: 65px;
  height: 26px;
  border-radius: 13px;
  background: #f2f2f2;
  color: #2e2e2e;
}

.tools {
  grid-row: 2 / 4;
  overflow: hidden;
  padding-top: 8px;
}

.group {
  display: flex;
  flex-direction: column;
  align-items: center;
  gap: 4px;
}

.group:first-child {
  height: 281px;
  gap: 0;
  justify-content: space-between;
}

.group + .group::before {
  content: "";
  width: 34px;
  height: 1px;
  margin: 7px 0 3px;
  background: #434343;
}

.group button {
  width: 32px;
  height: 32px;
}

.group .icon {
  width: 22px;
  height: 22px;
}

.tools .active {
  border-radius: 5px;
  background: #3d3d3d;
}

.chart {
  min-width: 0;
  display: grid;
  grid-template-columns: minmax(0, 1fr) 50px;
  grid-template-rows: minmax(0, 1fr) 30px 37px;
  border-radius: 4px;
  overflow: hidden;
}

.plot {
  position: relative;
}

.canvas {
  position: absolute;
  inset: 0;
  overflow: visible;
}

.grid {
  stroke: #1c1c1c;
}

.up {
  fill: #2f5be8;
}

.down {
  fill: #fff;
}

.path {
  fill: none;
  stroke: #5f8a7c;
  stroke-dasharray: 5 5;
}

.arrow {
  fill: none;
  stroke: #e0204a;
  stroke-width: 2;
}

.bos {
  fill: #a9273c;
  font-size: 7px;
}

.cursor-line {
  stroke: #a8a8a8;
  stroke-dasharray: 5 5;
}

.legend {
  position: absolute;
  top: 5px;
  left: 9px;
  display: flex;
  flex-direction: column;
  align-items: flex-start;
}

.title {
  display: flex;
  align-items: center;
  height: 20px;
}

.coin {
  width: 17px;
  height: 17px;
}

.title h1 {
  margin: 0 12px 0 3px;
  background: rgba(15, 15, 15, 0.5);
  color: #c4c4c4;
  font-size: 14px;
  font-weight: 600;
  line-height: 20px;
  white-space: nowrap;
}

.status {
  width: 8px;
  height: 8px;
  border: 4px solid #12352c;
  border-radius: 50%;
  background: #4fc3a1;
}

.title p {
  display: flex;
  gap: 5px;
  margin: 0 0 0 6px;
  font-weight: 500;
  white-space: nowrap;
}

.title b {
  font-weight: 600;
}

.quotes {
  display: flex;
  align-items: center;
  margin: 5px 0 7px;
}

.quotes button {
  width: 58px;
  height: 32px;
  flex-direction: column;
  border-radius: 5px;
  color: #fff;
  line-height: 13px;
}

.quotes span {
  font-size: 11px;
}

.quotes small {
  width: 20px;
  font-size: 10px;
  text-align: center;
}

.sell {
  background: #e0204a;
}

.buy {
  background: #2962ff;
}

.collapse {
  width: 30px;
  height: 19px;
  box-sizing: border-box;
  border: 1px solid #3a3a3a;
  border-radius: 3px;
}

.collapse .icon {
  width: 18px;
  height: 18px;
  stroke-width: 2;
}

.favourites {
  position: absolute;
  top: 8px;
  right: 84px;
  height: 36px;
  display: flex;
  align-items: center;
  padding-left: 8px;
  border-radius: 6px;
  background: #1d1d1d;
}

.favourites button {
  width: 36px;
}

.favourites .active {
  color: #2f5be8;
}

.grip {
  width: 10px;
  height: 15px;
  margin-right: 1px;
  background: radial-gradient(circle, #555 1px, transparent 1px) 0 0 / 5px 5px;
}

.order {
  position: absolute;
  right: 60px;
  height: 18px;
  display: flex;
}

.box {
  display: flex;
  border: 1px solid;
  border-radius: 4px;
  background: #0f0f0f;
  overflow: hidden;
}

.box > * {
  display: flex;
  align-items: center;
  justify-content: center;
}

.box span {
  width: 20px;
}

.box .pnl {
  width: 99px;
  border: solid #3a3a3a;
  border-width: 0 1px;
  font-weight: 500;
}

.box button {
  width: 22px;
}

.box .icon {
  width: 22px;
  height: 22px;
  stroke-width: 1.5;
}

.stop {
  top: 57px;
  color: #ed9a1f;
}

.position {
  top: 138px;
  color: #e0204a;
}

.take {
  top: 378px;
  color: #1f9c7c;
}

.position .box .qty {
  width: 27px;
  background: #e0204a;
  color: #fff;
}

.position .pnl {
  color: #1f9c7c;
}

.flip {
  width: 28px;
  box-sizing: border-box;
  border: 1px solid;
  border-radius: 4px;
  background: #0f0f0f;
}

.flip .icon {
  width: 18px;
  height: 18px;
  stroke-width: 2;
}

.brackets {
  display: flex;
  margin: 0 9px;
}

.brackets button {
  width: 28px;
  box-sizing: border-box;
  border: 1px dotted;
  border-radius: 4px;
  background: #0f0f0f;
}

.tp {
  color: #1f9c7c;
}

.sl {
  color: #ed9a1f;
}

.add-here {
  position: absolute;
  top: 250px;
  right: 0;
  width: 20px;
  height: 20px;
  background: #3a3a3a;
}

.add-here .icon {
  width: 18px;
  height: 18px;
  stroke-width: 1.5;
}

.brand {
  position: absolute;
  left: 12px;
  bottom: 4px;
  display: flex;
  align-items: center;
  gap: 6px;
  font: 600 19px/22px Inter, sans-serif;
}

.brand svg {
  width: 28px;
  height: 22px;
  fill: currentColor;
}

.prices {
  position: relative;
  font-size: 11px;
}

.price,
.tag,
.last {
  position: absolute;
  left: 1px;
  width: 46px;
  text-align: center;
}

.price {
  transform: translateY(-50%);
  color: #b8b8b8;
}

.tag {
  height: 18px;
  box-sizing: border-box;
  border-radius: 1px;
  transform: translateY(-50%);
  color: #fff;
  font-weight: 700;
  line-height: 18px;
}

.red {
  background: #e0204a;
}

.gray {
  background: #808080;
}

.green {
  background: #3b9a3b;
}

.cursor {
  height: 20px;
  background: #3a3a3a;
  line-height: 20px;
}

.teal {
  background: #18a37c;
}

.orange,
.outline {
  border: 1px solid;
  background: #0f0f0f;
  font-weight: 600;
  line-height: 16px;
}

.orange {
  color: #ed9a1f;
}

.outline {
  color: #1f9c7c;
}

.last {
  top: 318px;
  height: 29px;
  background: #fff;
  color: #444;
  font-weight: 500;
  line-height: 14px;
}

.times {
  position: relative;
  border-bottom: 1px solid #2e2e2e;
  color: #b8b8b8;
  font-size: 11px;
}

.times span {
  position: absolute;
  top: 9px;
  transform: translateX(-50%);
}

.stamp {
  position: absolute;
  top: 4px;
  left: 789px;
  width: 126px;
  height: 22px;
  display: flex;
  align-items: center;
  justify-content: center;
  gap: 9px;
  padding-top: 4px;
  box-sizing: border-box;
  background: #3a3a3a;
  color: #fff;
  font-weight: 600;
  white-space: nowrap;
}

.axis-settings {
  border-bottom: 1px solid #2e2e2e;
  padding-top: 5px;
}

.axis-settings .icon {
  width: 15px;
  height: 15px;
  stroke-width: 1.7;
}

.ranges {
  grid-column: 1 / -1;
  display: flex;
  align-items: center;
  gap: 10px;
  padding: 0 8px 0 14px;
}

.ranges .bar {
  margin-left: 5px;
}

.ranges .clock {
  margin-left: auto;
  font-size: 13px;
}

.paper {
  grid-column: 2;
  display: flex;
  align-items: center;
  gap: 7px;
  padding: 0 6px 0 8px;
  border-radius: 4px 4px 0 0;
}

.broker {
  position: relative;
  width: 22px;
  height: 22px;
  display: flex;
  align-items: center;
  justify-content: center;
  border-radius: 4px;
  background: #f2f2f2;
}

.broker svg {
  width: 15px;
  height: 12px;
  fill: #0f0f0f;
}

.broker::after {
  content: "";
  position: absolute;
  top: -1px;
  right: -2px;
  width: 6px;
  height: 6px;
  border-radius: 50%;
  background: #18a37c;
}

.outlined {
  width: 57px;
  height: 23px;
  margin-left: 4px;
  box-sizing: border-box;
  border: 1px solid #434343;
  border-radius: 5px;
}

.up-btn {
  margin: 0 5px 0 auto;
}

.paper .icon {
  width: 22px;
  height: 22px;
}

.rail {
  grid-column: 3;
  grid-row: 2 / 4;
  display: flex;
  flex-direction: column;
  align-items: center;
  overflow: hidden;
  padding: 2px 0 1px;
}

.rail button {
  position: relative;
  width: 42px;
  height: 42px;
}

.rail .icon {
  width: 22px;
  height: 22px;
}

.rail .badge {
  top: 3px;
  right: 3px;
}

.spacer {
  flex: 1;
}

.apps svg {
  width: 32px;
  height: 32px;
}

.rail hr {
  width: 32px;
  height: 1px;
  flex: none;
  margin: 6px 0;
  border: 0;
  background: #434343;
}

/* taskbar */
.taskbar {
  flex: none;
  height: 45px;
  display: flex;
  align-items: center;
  background: #000;
  line-height: 15px;
}

.weather {
  width: 263px;
  justify-content: flex-start;
  gap: 4px;
  padding-left: 15px;
  box-sizing: border-box;
  text-align: left;
  font-size: 11px;
}

.weather svg {
  width: 28px;
  height: 26px;
  margin-top: -6px;
}

.weather text {
  fill: #3a1218;
  font-size: 10px;
}

.pin {
  position: relative;
  width: 41px;
  height: 38px;
  border-radius: 4px;
}

.pin svg {
  width: 23px;
  height: 23px;
}

.pin.open {
  background: #151515;
}

.pin i {
  position: absolute;
  top: 3px;
  right: 5px;
  width: 14px;
  height: 14px;
  border-radius: 50%;
  background: #455a64;
  font-size: 9px;
  line-height: 14px;
  text-align: center;
}

.pin.open::after,
.pin.running::after {
  content: "";
  position: absolute;
  bottom: 0;
  width: 6px;
  height: 3px;
  border-radius: 2px;
  background: #8a8a8a;
}

.pin.open::after {
  width: 15px;
  background: #4cc2ff;
}

.search {
  width: 207px;
  height: 31px;
  box-sizing: border-box;
  display: flex;
  align-items: center;
  gap: 7px;
  margin: 0 2px;
  padding: 0 7px;
  border: 1px solid #2e2e2e;
  border-radius: 16px;
  background: #242424;
}

.search .icon {
  width: 20px;
  height: 20px;
  stroke-width: 2;
}

.search input {
  flex: 1;
  min-width: 0;
}

.search input::placeholder {
  color: #c7c7c7;
  opacity: 1;
}

.tray {
  display: flex;
  align-items: center;
  margin-left: auto;
  padding-right: 17px;
  color: #fff;
  font-size: 11px;
}

.tray > button {
  width: 30px;
}

.mic {
  color: #5fb8b0;
}

.tray .icon {
  width: 22px;
  height: 22px;
}

.lang {
  width: 42px;
  text-align: center;
}

.tray .quick {
  width: 75px;
  gap: 2px;
}

.date {
  width: 64px;
  text-align: right;
}
</style>
